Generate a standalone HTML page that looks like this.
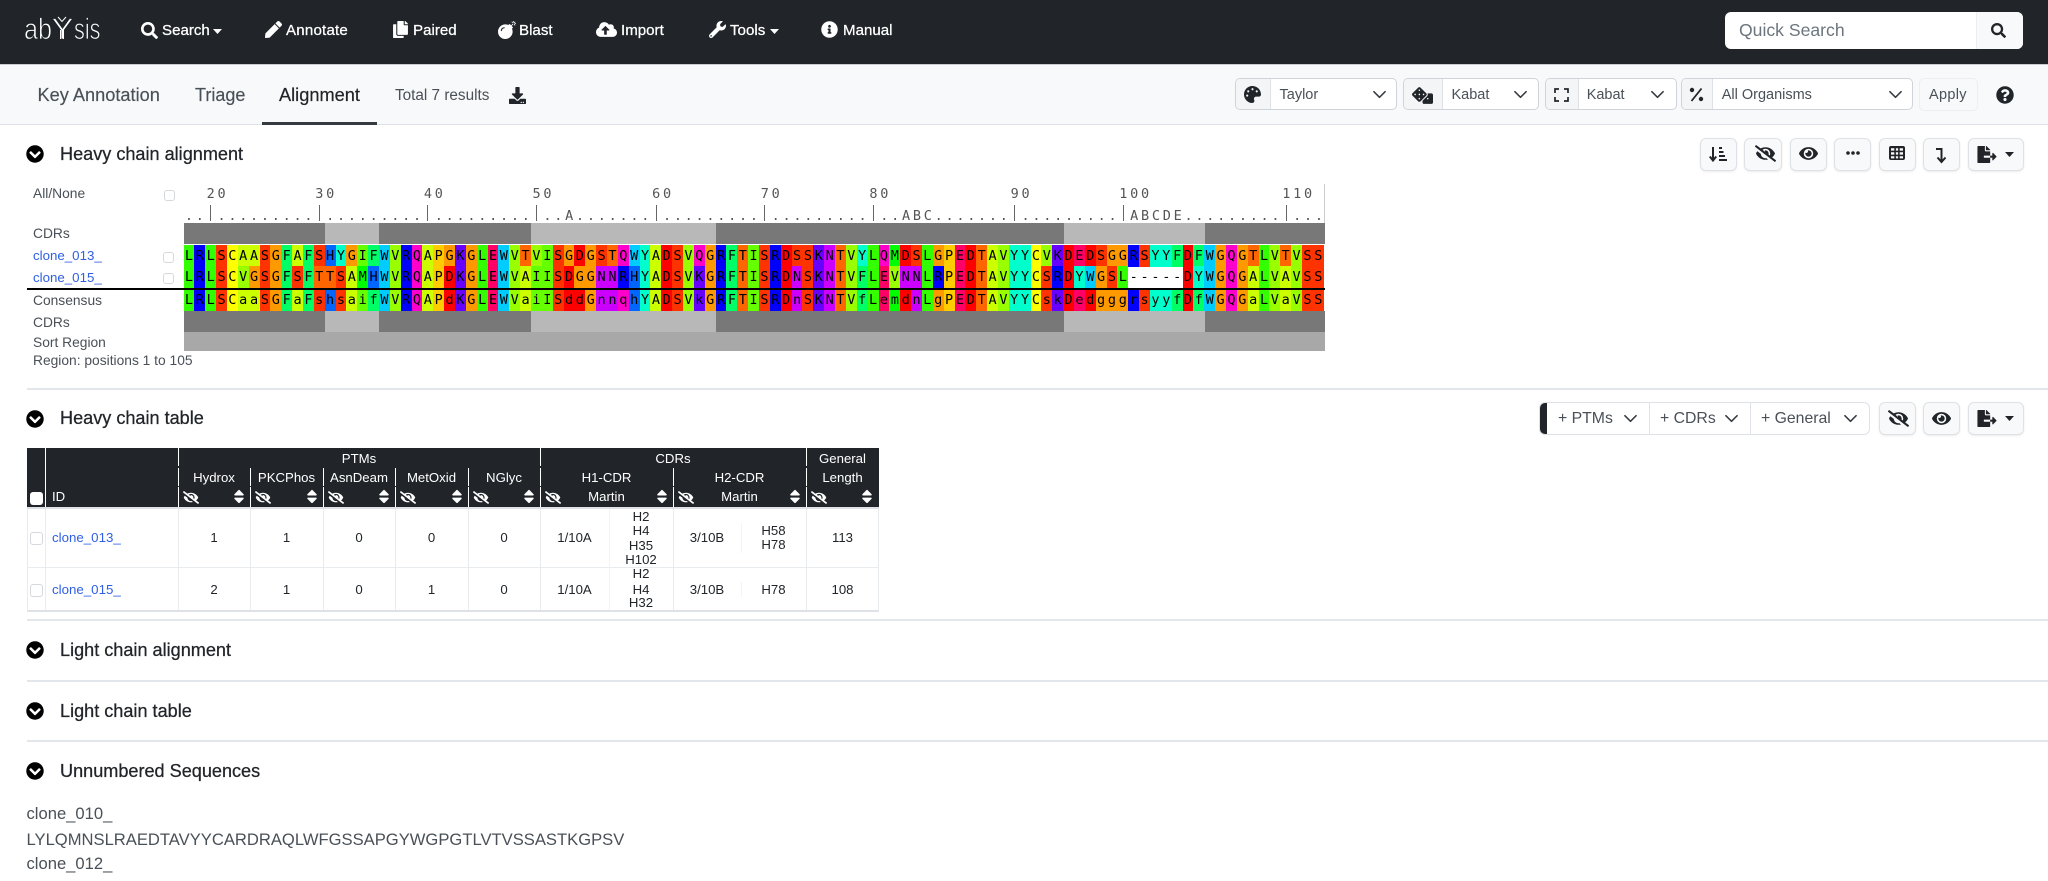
<!DOCTYPE html>
<html lang="en"><head><meta charset="utf-8"><title>abYsis</title>
<style>
html,body{margin:0;padding:0;width:2048px;height:881px;overflow:hidden;background:#fff;font-family:"Liberation Sans",Arial,sans-serif;color:#212529}
div,span,svg,a{position:absolute}
.t{white-space:nowrap;line-height:20px;height:20px}
.n{color:#fff;font-size:15.1px;-webkit-text-stroke:.25px #fff;top:21px}
.nav svg{color:#fff}
svg{display:block;fill:currentColor}
.h{font-size:18.1px;color:#212529;-webkit-text-stroke:.25px #212529;left:60px}
.l{font-size:13.8px;color:#495057;left:33px}
.lk{color:#2f5fe3;font-size:13.3px}
.sel{top:78px;height:30px;background:#fff;border:1px solid #ced4da;border-radius:5px;overflow:hidden}
.ad{left:0;top:0;bottom:0;background:#f4f5f7;border-right:1px solid #dee2e6}
.st{font-size:14.5px;color:#495057;top:85px}
.ch{width:15px;height:15px;fill:none;stroke:#343a40;stroke-width:1.6}
.btn{top:138px;height:31px;background:#f8f9fa;border:1px solid #dee2e6;border-radius:6px;box-shadow:0 1px 2px rgba(0,0,0,.08)}
.b2{top:402px}
.ic{color:#212529}
.sep{left:27px;width:2021px;height:2px;background:#e3e6ea}
.cb{width:11px;height:11px;border:1px solid #d5d8dc;border-radius:3px;background:#fff}
.cs{width:9px;height:9px}
.seq{left:183.5px;width:1142px;height:22px;line-height:22px;font-family:"DejaVu Sans Mono","Liberation Mono",monospace;font-size:13.5px;color:#000;white-space:nowrap}
.seq i{font-style:normal;display:inline-block;width:10.865px;text-align:center;height:100%;vertical-align:top}
.rul{left:184.87px;font-family:"DejaVu Sans Mono","Liberation Mono",monospace;font-size:13.5px;letter-spacing:2.738px;color:#555;white-space:pre;line-height:20px;height:20px}
.tk{width:1.2px;height:16px;top:205px;background:#666}
.D{background:#f00}.S{background:#f30}.T{background:#f60}.G{background:#f90}.P{background:#fc0}.C{background:#ff0}.A{background:#cf0}.V{background:#9f0}.I{background:#6f0}.L{background:#3f0}.M{background:#0f0}.F{background:#0f6}.Y{background:#0fc}.W{background:#0cf}.H{background:#06f}.R{background:#00f}.K{background:#60f}.N{background:#c0f}.Q{background:#f0c}.E{background:#f06}
.band{height:21px}
.th{font-size:13.2px;color:#fff;text-align:center}
.td{font-size:13.2px;color:#212529;text-align:center}
.wl{width:1px;background:#fff}
.gl{background:#e9ecef}
.w{color:#fff}
</style></head><body>
<svg width="0" height="0" style="position:absolute"><defs>
<symbol id="search" viewBox="0 0 512 512"><path d="M505 442.7L405.3 343c-4.5-4.5-10.6-7-17-7H372c27.6-35.3 44-79.7 44-128C416 93.1 322.9 0 208 0S0 93.1 0 208s93.1 208 208 208c48.3 0 92.7-16.4 128-44v16.3c0 6.4 2.5 12.5 7 17l99.7 99.7c9.4 9.4 24.6 9.4 33.9 0l28.3-28.3c9.4-9.4 9.4-24.6.1-34zM208 336c-70.7 0-128-57.2-128-128 0-70.7 57.2-128 128-128 70.7 0 128 57.2 128 128 0 70.7-57.2 128-128 128z"/></symbol>
<symbol id="pen" viewBox="0 0 512 512"><path d="M290.74 93.24l128.02 128.02-277.99 277.99-114.14 12.6C11.35 513.54-1.56 500.62.14 485.34l12.7-114.22 277.9-278.88zm207.2-19.06l-60.11-60.11c-18.75-18.75-49.16-18.75-67.9 0l-56.55 56.55 128.02 128.02 56.55-56.55c18.75-18.76 18.75-49.16 0-67.91z"/></symbol>
<symbol id="copy" viewBox="0 0 448 512"><path d="M320 448v40c0 13.255-10.745 24-24 24H24c-13.255 0-24-10.745-24-24V120c0-13.255 10.745-24 24-24h72v296c0 30.879 25.121 56 56 56h168zm0-344V0H152c-13.255 0-24 10.745-24 24v368c0 13.255 10.745 24 24 24h272c13.255 0 24-10.745 24-24V128H344c-13.2 0-24-10.8-24-24zm120.971-31.029L375.029 7.029A24 24 0 0 0 358.059 0H352v96h96v-6.059a24 24 0 0 0-7.029-16.97z"/></symbol>
<symbol id="bomb" viewBox="0 0 512 512"><path d="M440.5 88.5l-52 52L415 167c9.4 9.4 9.4 24.6 0 33.9l-17.4 17.4c11.8 26.1 18.4 55.1 18.4 85.6 0 114.9-93.1 208-208 208S0 418.9 0 304 93.1 96 208 96c30.5 0 59.5 6.6 85.6 18.4L311 97c9.4-9.4 24.6-9.4 33.9 0l26.5 26.5 52-52 17.1 17zM500 60h-24c-6.6 0-12 5.4-12 12s5.4 12 12 12h24c6.6 0 12-5.4 12-12s-5.4-12-12-12zM440 0c-6.6 0-12 5.4-12 12v24c0 6.6 5.4 12 12 12s12-5.4 12-12V12c0-6.6-5.4-12-12-12zm33.9 55l17-17c4.7-4.7 4.7-12.3 0-17-4.7-4.7-12.3-4.7-17 0l-17 17c-4.7 4.7-4.7 12.3 0 17 4.8 4.7 12.4 4.7 17 0zm-67.8 0c4.7 4.7 12.3 4.7 17 0 4.7-4.7 4.7-12.3 0-17l-17-17c-4.7-4.7-12.3-4.7-17 0-4.7 4.7-4.7 12.3 0 17l17 17zm67.8 34c-4.7-4.7-12.3-4.7-17 0-4.7 4.7-4.7 12.3 0 17l17 17c4.7 4.7 12.3 4.7 17 0 4.7-4.7 4.7-12.3 0-17l-17-17zM112 272c0-35.3 28.7-64 64-64 8.8 0 16-7.2 16-16s-7.2-16-16-16c-52.9 0-96 43.1-96 96 0 8.8 7.2 16 16 16s16-7.2 16-16z"/></symbol>
<symbol id="cloud" viewBox="0 0 640 512"><path d="M537.6 226.6c4.1-10.7 6.4-22.4 6.4-34.6 0-53-43-96-96-96-19.7 0-38.1 6-53.3 16.2C367 64.2 315.3 32 256 32c-88.4 0-160 71.6-160 160 0 2.7.1 5.4.2 8.1C40.2 219.8 0 273.2 0 336c0 79.5 64.5 144 144 144h368c70.7 0 128-57.3 128-128 0-61.9-44-113.6-102.4-125.4zM393.4 288H328v112c0 8.8-7.2 16-16 16h-48c-8.8 0-16-7.2-16-16V288h-65.4c-14.3 0-21.4-17.2-11.3-27.3l105.4-105.4c6.2-6.2 16.4-6.2 22.6 0l105.4 105.4c10.1 10.1 2.9 27.3-11.3 27.3z"/></symbol>
<symbol id="wrench" viewBox="0 0 512 512"><path d="M507.73 109.1c-2.24-9.03-13.54-12.09-20.12-5.51l-74.36 74.36-67.88-11.31-11.31-67.88 74.36-74.36c6.62-6.62 3.43-17.9-5.66-20.16-47.38-11.74-99.55.91-136.58 37.93-39.64 39.64-50.55 97.1-34.05 147.2L18.74 402.76c-24.99 24.99-24.99 65.51 0 90.5 24.99 24.99 65.51 24.99 90.5 0l213.21-213.21c50.12 16.71 107.47 5.68 147.37-34.22 37.07-37.07 49.7-89.32 37.91-136.73zM64 472c-13.25 0-24-10.75-24-24 0-13.26 10.75-24 24-24s24 10.74 24 24c0 13.25-10.75 24-24 24z"/></symbol>
<symbol id="info" viewBox="0 0 512 512"><path d="M256 8C119.043 8 8 119.083 8 256c0 136.997 111.043 248 248 248s248-111.003 248-248C504 119.083 392.957 8 256 8zm0 110c23.196 0 42 18.804 42 42s-18.804 42-42 42-42-18.804-42-42 18.804-42 42-42zm56 254c0 6.627-5.373 12-12 12h-88c-6.627 0-12-5.373-12-12v-24c0-6.627 5.373-12 12-12h12v-64h-12c-6.627 0-12-5.373-12-12v-24c0-6.627 5.373-12 12-12h64c6.627 0 12 5.373 12 12v100h12c6.627 0 12 5.373 12 12v24z"/></symbol>
<symbol id="dl" viewBox="0 0 512 512"><path d="M216 0h80c13.3 0 24 10.7 24 24v168h87.7c17.8 0 26.7 21.5 14.1 34.1L269.7 378.3c-7.5 7.5-19.8 7.5-27.3 0L90.1 226.1c-12.6-12.6-3.7-34.1 14.1-34.1H192V24c0-13.3 10.7-24 24-24zm296 376v112c0 13.3-10.7 24-24 24H24c-13.3 0-24-10.7-24-24V376c0-13.3 10.7-24 24-24h146.7l49 49c20.1 20.1 52.5 20.1 72.6 0l49-49H488c13.3 0 24 10.7 24 24zm-124 88c0-11-9-20-20-20s-20 9-20 20 9 20 20 20 20-9 20-20zm64 0c0-11-9-20-20-20s-20 9-20 20 9 20 20 20 20-9 20-20z"/></symbol>
<symbol id="palette" viewBox="0 0 512 512"><path d="M204.3 5C104.9 24.4 24.8 104.3 5.2 203.4c-37 187 131.7 326.4 258.8 306.7 41.2-6.4 61.4-54.6 42.5-91.7-23.1-45.4 9.9-98.4 60.9-98.4h79.7c35.8 0 64.8-29.6 64.9-65.3C511.5 97.1 368.1-26.9 204.3 5zM96 320c-17.7 0-32-14.3-32-32s14.3-32 32-32 32 14.3 32 32-14.3 32-32 32zm32-128c-17.7 0-32-14.3-32-32s14.3-32 32-32 32 14.3 32 32-14.3 32-32 32zm128-64c-17.7 0-32-14.3-32-32s14.3-32 32-32 32 14.3 32 32-14.3 32-32 32zm128 64c-17.7 0-32-14.3-32-32s14.3-32 32-32 32 14.3 32 32-14.3 32-32 32z"/></symbol>
<symbol id="dice" viewBox="0 0 640 512"><path d="M592 192H473.26c12.69 29.59 7.12 65.2-17 89.32L320 417.58V464c0 26.51 21.49 48 48 48h224c26.51 0 48-21.49 48-48V240c0-26.51-21.49-48-48-48zM480 376c-13.25 0-24-10.75-24-24 0-13.26 10.75-24 24-24s24 10.74 24 24c0 13.25-10.75 24-24 24zm-46.37-186.7L258.7 14.37c-19.16-19.16-50.23-19.16-69.39 0L14.37 189.3c-19.16 19.16-19.16 50.23 0 69.39L189.3 433.63c19.16 19.16 50.23 19.16 69.39 0L433.63 258.7c19.16-19.17 19.16-50.24 0-69.4zM96 248c-13.25 0-24-10.75-24-24 0-13.26 10.75-24 24-24s24 10.74 24 24c0 13.25-10.75 24-24 24zm128 128c-13.25 0-24-10.75-24-24 0-13.26 10.75-24 24-24s24 10.74 24 24c0 13.25-10.75 24-24 24zm0-128c-13.25 0-24-10.75-24-24 0-13.26 10.75-24 24-24s24 10.74 24 24c0 13.25-10.75 24-24 24zm0-128c-13.25 0-24-10.75-24-24 0-13.26 10.75-24 24-24s24 10.74 24 24c0 13.25-10.75 24-24 24zm128 128c-13.25 0-24-10.75-24-24 0-13.26 10.75-24 24-24s24 10.74 24 24c0 13.25-10.75 24-24 24z"/></symbol>
<symbol id="q" viewBox="0 0 512 512"><path d="M504 256c0 136.997-111.043 248-248 248S8 392.997 8 256C8 119.083 119.043 8 256 8s248 111.083 248 248zM262.655 90c-54.497 0-89.255 22.957-116.549 63.758-3.536 5.286-2.353 12.415 2.715 16.258l34.699 26.31c5.205 3.947 12.621 3.008 16.665-2.122 17.864-22.658 30.113-35.797 57.303-35.797 20.429 0 45.698 13.148 45.698 32.958 0 14.976-12.363 22.667-32.534 33.976C247.128 238.528 216 254.941 216 296v4c0 6.627 5.373 12 12 12h56c6.627 0 12-5.373 12-12v-1.333c0-28.462 83.186-29.647 83.186-106.667 0-58.002-60.165-102-116.531-102zM256 338c-25.365 0-46 20.635-46 46 0 25.364 20.635 46 46 46s46-20.636 46-46c0-25.365-20.635-46-46-46z"/></symbol>
<symbol id="cc" viewBox="0 0 512 512"><path d="M504 256c0 137-111 248-248 248S8 393 8 256 119 8 256 8s248 111 248 248zM273 369.9l135.5-135.5c9.4-9.4 9.4-24.6 0-33.9l-17-17c-9.4-9.4-24.6-9.4-33.9 0L256 285.1 154.4 183.5c-9.4-9.4-24.6-9.4-33.9 0l-17 17c-9.4 9.4-9.4 24.6 0 33.9L239 369.9c9.4 9.4 24.6 9.4 34 0z"/></symbol>
<symbol id="eyes" viewBox="0 0 640 512"><path d="M320 400c-75.85 0-137.25-58.71-142.9-133.11L72.2 185.82c-13.79 17.3-26.48 35.59-36.72 55.59a32.35 32.35 0 0 0 0 29.19C89.71 376.41 197.07 448 320 448c26.91 0 52.87-4 77.89-10.46L346 397.39a144.13 144.13 0 0 1-26 2.61zm313.82 58.1l-110.55-85.44a331.25 331.25 0 0 0 81.25-102.07 32.35 32.35 0 0 0 0-29.19C550.29 135.59 442.93 64 320 64a308.15 308.15 0 0 0-147.32 37.7L45.46 3.37A16 16 0 0 0 23 6.18L3.37 31.45A16 16 0 0 0 6.18 53.9l588.36 454.73a16 16 0 0 0 22.46-2.81l19.64-25.27a16 16 0 0 0-2.82-22.45zm-183.72-142l-39.3-30.38A94.75 94.75 0 0 0 416 256a94.76 94.76 0 0 0-121.31-92.21A47.65 47.65 0 0 1 304 192a46.64 46.64 0 0 1-1.54 10l-73.61-56.89A142.31 142.31 0 0 1 320 112a143.92 143.92 0 0 1 144 144c0 21.63-5.29 41.79-13.9 60.11z"/></symbol>
<symbol id="eye" viewBox="0 0 576 512"><path d="M572.52 241.4C518.29 135.59 410.93 64 288 64S57.68 135.64 3.48 241.41a32.35 32.35 0 0 0 0 29.19C57.71 376.41 165.07 448 288 448s230.32-71.64 284.52-177.41a32.35 32.35 0 0 0 0-29.19zM288 400a144 144 0 1 1 144-144 143.93 143.93 0 0 1-144 144zm0-240a95.31 95.31 0 0 0-25.31 3.79 47.85 47.85 0 0 1-66.9 66.9A95.78 95.78 0 1 0 288 160z"/></symbol>
<symbol id="th" viewBox="0 0 16 16"><path fill-rule="evenodd" d="M2 1h12a2 2 0 0 1 2 2v10a2 2 0 0 1-2 2H2a2 2 0 0 1-2-2V3a2 2 0 0 1 2-2zm0 2.200v2.400h3.300V3.200zm4.900 0v2.400h2.200V3.200zm3.800 0v2.400H14V3.200zM2 7.200v2.400h3.300V7.200zm4.900 0v2.400h2.200V7.200zm3.800 0v2.400H14V7.200zM2 11.200v2.200h3.300v-2.200zm4.900 0v2.200h2.200v-2.200zm3.800 0v2.200H14v-2.200z"/></symbol>
<symbol id="fx" viewBox="0 0 576 512"><path d="M384 121.9c0-6.3-2.5-12.4-7-16.9L279.1 7c-4.5-4.5-10.6-7-17-7H256v128h128zM571 308l-95.7-96.4c-10.1-10.1-27.4-3-27.4 11.3V288h-64v64h64v65.2c0 14.3 17.3 21.4 27.4 11.3L571 332c6.6-6.6 6.6-17.4 0-24zm-379 28v-32c0-8.8 7.2-16 16-16h176V160H248c-13.2 0-24-10.8-24-24V0H24C10.7 0 0 10.7 0 24v464c0 13.3 10.7 24 24 24h336c13.3 0 24-10.7 24-24V352H208c-8.8 0-16-7.2-16-16z"/></symbol>
<symbol id="sort" viewBox="0 0 320 512"><path d="M41 288h238c21.4 0 32.1 25.9 17 41L177 448c-9.4 9.4-24.6 9.4-33.9 0L24 329c-15.1-15.1-4.4-41 17-41zm255-105L177 64c-9.4-9.4-24.6-9.4-33.9 0L24 183c-15.1 15.1-4.4 41 17 41h238c21.4 0 32.1-25.9 17-41z"/></symbol>
<symbol id="chev" viewBox="0 0 16 16"><path d="M2 5l6 6 6-6" fill="none" stroke-linecap="round" stroke-linejoin="round"/></symbol>
</defs></svg>

<!-- NAV -->
<div class="nav" style="left:0;top:0;width:2048px;height:64px;background:#212529;border-bottom:1px solid #c9cdd1">
<svg style="left:20px;top:10px;width:90px;height:40px;overflow:visible" viewBox="20 10 90 40">
<g font-family="Liberation Sans" fill="#fff" stroke="#212529" stroke-width=".85">
<text x="24" y="39" font-size="30" textLength="28" lengthAdjust="spacingAndGlyphs">ab</text>
<text x="51.500" y="39" font-size="30" textLength="22" lengthAdjust="spacingAndGlyphs">Y</text>
<text x="74" y="39" font-size="30" textLength="26.500" lengthAdjust="spacingAndGlyphs">sis</text>
</g>
<path d="M58 17l4 4.500 4-4.500M60.500 30v9M63.500 30v9" fill="none" stroke="#fff" stroke-width="1"/>
</svg>
<svg style="left:141px;top:22px;width:17px;height:17px"><use href="#search"/></svg>
<span class="t n" style="left:162px">Search</span>
<svg style="left:213px;top:29px;width:9px;height:5px" viewBox="0 0 9 5"><path d="M0 0h9L4.500 5z"/></svg>
<svg style="left:265px;top:21px;width:17px;height:17px"><use href="#pen"/></svg>
<span class="t n" style="left:286px;letter-spacing:.2px">Annotate</span>
<svg style="left:392px;top:21px;width:17px;height:17px"><use href="#copy"/></svg>
<span class="t n" style="left:413px">Paired</span>
<svg style="left:498px;top:21px;width:18px;height:18px"><use href="#bomb"/></svg>
<span class="t n" style="left:519px">Blast</span>
<svg style="left:596px;top:21px;width:21px;height:17px"><use href="#cloud"/></svg>
<span class="t n" style="left:621px">Import</span>
<svg style="left:709px;top:21px;width:17px;height:17px"><use href="#wrench"/></svg>
<span class="t n" style="left:730px">Tools</span>
<svg style="left:770px;top:29px;width:9px;height:5px" viewBox="0 0 9 5"><path d="M0 0h9L4.500 5z"/></svg>
<svg style="left:821px;top:21px;width:17px;height:17px"><use href="#info"/></svg>
<span class="t n" style="left:843px">Manual</span>
<div style="left:1725px;top:12px;width:298px;height:37px;background:#fff;border-radius:6px;overflow:hidden">
<div style="left:251px;top:0;width:47px;height:37px;background:#f8f9fa;border-left:1px solid #eceef0"></div>
<span class="t" style="left:14px;top:8px;font-size:17.6px;color:#6c757d">Quick Search</span>
<svg style="left:266px;top:11px;width:15px;height:15px;color:#212529"><use href="#search"/></svg>
</div>
</div>

<!-- TOOLBAR -->
<div style="left:0;top:65px;width:2048px;height:59px;background:#f8f9fa"></div>
<div style="left:0;top:124px;width:2048px;height:1px;background:#dee2e6"></div>
<span class="t" style="left:37.500px;top:85px;font-size:18.2px;color:#495057;-webkit-text-stroke:.15px #495057">Key Annotation</span>
<span class="t" style="left:195px;top:85px;font-size:18px;color:#495057;-webkit-text-stroke:.15px #495057">Triage</span>
<span class="t" style="left:279px;top:85px;font-size:18.2px;color:#212529;-webkit-text-stroke:.2px #212529">Alignment</span>
<div style="left:262px;top:122px;width:115px;height:3px;background:#343a40"></div>
<span class="t" style="left:395px;top:86px;font-size:15.3px;color:#495057">Total 7 results</span>
<svg class="ic" style="left:509px;top:87px;width:17px;height:17px"><use href="#dl"/></svg>

<div class="sel" style="left:1235px;width:160px"><div class="ad" style="width:34px"></div></div>
<svg class="ic" style="left:1244px;top:86px;width:17px;height:17px"><use href="#palette"/></svg>
<span class="t st" style="left:1279.500px">Taylor</span>
<svg class="ch" style="left:1371.500px;top:87px"><use href="#chev"/></svg>

<div class="sel" style="left:1403px;width:134px"><div class="ad" style="width:38px"></div></div>
<svg class="ic" style="left:1412px;top:87px;width:21px;height:17px"><use href="#dice"/></svg>
<span class="t st" style="left:1451.500px">Kabat</span>
<svg class="ch" style="left:1512.500px;top:87px"><use href="#chev"/></svg>

<div class="sel" style="left:1544.500px;width:130px"><div class="ad" style="width:32px"></div></div>
<svg class="ic" style="left:1554px;top:87px;width:15px;height:16px" viewBox="0 0 15 16"><path d="M1 6V2h4M10 2h4v4M14 10v4h-4M5 14H1v-4" fill="none" stroke="currentColor" stroke-width="1.700"/></svg>
<span class="t st" style="left:1586.700px">Kabat</span>
<svg class="ch" style="left:1650px;top:87px"><use href="#chev"/></svg>

<div class="sel" style="left:1681px;width:230px"><div class="ad" style="width:30px"></div></div>
<svg class="ic" style="left:1689px;top:87px;width:15px;height:15px" viewBox="0 0 15 15"><path d="M12.500 1.500L2.500 14" stroke="currentColor" stroke-width="1.800" fill="none"/><circle cx="3" cy="3" r="2.200"/><circle cx="12" cy="12" r="2.200"/></svg>
<span class="t st" style="left:1721.700px">All Organisms</span>
<svg class="ch" style="left:1887.500px;top:87px"><use href="#chev"/></svg>

<div style="left:1919px;top:78px;width:57px;height:31px;background:#f8f9fa;border:1px solid #eceef0;border-radius:5px"></div>
<span class="t st" style="left:1929px;color:#495057;letter-spacing:.3px">Apply</span>
<svg class="ic" style="left:1996px;top:86px;width:18px;height:18px"><use href="#q"/></svg>

<!-- HEAVY ALIGN HEAD -->
<svg style="left:26px;top:145px;width:18px;height:18px;color:#000"><use href="#cc"/></svg>
<span class="t h" style="top:144px">Heavy chain alignment</span>
<div class="btn" style="left:1700px;width:35px"></div>
<svg class="ic" style="left:1709px;top:146px;width:18px;height:17px" viewBox="0 0 18 17"><path d="M4 1v13M.800 10.500L4 14.500l3.200-4" fill="none" stroke="currentColor" stroke-width="2"/><rect x="10" y="1" width="3" height="2"/><rect x="10" y="5" width="4.500" height="2"/><rect x="10" y="9" width="6" height="2"/><rect x="10" y="13" width="8" height="2"/></svg>
<div class="btn" style="left:1744px;width:36px"></div>
<svg class="ic" style="left:1755px;top:145px;width:21px;height:17px"><use href="#eyes"/></svg>
<div class="btn" style="left:1790px;width:35px"></div>
<svg class="ic" style="left:1799px;top:145px;width:19px;height:17px"><use href="#eye"/></svg>
<div class="btn" style="left:1834px;width:35px"></div>
<svg class="ic" style="left:1846px;top:151px;width:14px;height:4px" viewBox="0 0 14 4"><circle cx="2" cy="2" r="1.800"/><circle cx="7" cy="2" r="1.800"/><circle cx="12" cy="2" r="1.800"/></svg>
<div class="btn" style="left:1879px;width:35px"></div>
<svg class="ic" style="left:1889px;top:145px;width:16px;height:16px"><use href="#th"/></svg>
<div class="btn" style="left:1923px;width:35px"></div>
<svg class="ic" style="left:1935px;top:147px;width:13px;height:17px" viewBox="0 0 13 17"><path d="M1 2h5.500v13M2.500 10.500l4 4.500 4-4.500" fill="none" stroke="currentColor" stroke-width="2"/></svg>
<div class="btn" style="left:1968px;width:54px"></div>
<svg class="ic" style="left:1977px;top:146px;width:20px;height:17px"><use href="#fx"/></svg>
<svg class="ic" style="left:2005px;top:152px;width:9px;height:5px" viewBox="0 0 9 5"><path d="M0 0h9L4.500 5z"/></svg>

<!-- ALIGNMENT -->
<span class="t l" style="top:184px">All/None</span>
<div class="cb cs" style="left:164px;top:190px"></div>
<span class="rul" style="top:184px">  20        30        40        50         60        70        80           90        100            110</span>
<span class="rul" style="top:206px">.. ......... ......... ......... ..A....... ......... ......... ..ABC....... ......... ABCDE......... ...</span>
<div class="tk" style="left:210px"></div><div class="tk" style="left:318.600px"></div><div class="tk" style="left:427.300px"></div><div class="tk" style="left:536px"></div><div class="tk" style="left:655.500px"></div><div class="tk" style="left:764.100px"></div><div class="tk" style="left:872.800px"></div><div class="tk" style="left:1014px"></div><div class="tk" style="left:1122.700px"></div><div class="tk" style="left:1285.700px"></div>
<div style="left:1324px;top:184px;width:1px;height:39px;background:#ccc"></div>
<span class="t l" style="top:224px">CDRs</span>
<a class="t lk" style="left:33px;top:246px">clone_013_</a>
<div class="cb cs" style="left:163px;top:252px"></div>
<a class="t lk" style="left:33px;top:268px">clone_015_</a>
<div class="cb cs" style="left:163px;top:273px"></div>
<span class="t l" style="top:291px">Consensus</span>
<span class="t l" style="top:313px">CDRs</span>
<span class="t l" style="top:333px">Sort Region</span>
<span class="t l" style="top:351px">Region: positions 1 to 105</span>

<div class="band" style="left:183.500px;top:223px;width:141.500px;background:#787878"></div>
<div class="band" style="left:325px;top:223px;width:54px;background:#b8b8b8"></div>
<div class="band" style="left:379px;top:223px;width:152px;background:#787878"></div>
<div class="band" style="left:531px;top:223px;width:185.300px;background:#b8b8b8"></div>
<div class="band" style="left:716.300px;top:223px;width:347.700px;background:#787878"></div>
<div class="band" style="left:1064px;top:223px;width:141px;background:#b8b8b8"></div>
<div class="band" style="left:1205px;top:223px;width:119.500px;background:#787878"></div>

<div class="seq" style="top:244.500px"><i class=L>L</i><i class=R>R</i><i class=L>L</i><i class=S>S</i><i class=C>C</i><i class=A>A</i><i class=A>A</i><i class=S>S</i><i class=G>G</i><i class=F>F</i><i class=A>A</i><i class=F>F</i><i class=S>S</i><i class=H>H</i><i class=Y>Y</i><i class=G>G</i><i class=I>I</i><i class=F>F</i><i class=W>W</i><i class=V>V</i><i class=R>R</i><i class=Q>Q</i><i class=A>A</i><i class=P>P</i><i class=G>G</i><i class=K>K</i><i class=G>G</i><i class=L>L</i><i class=E>E</i><i class=W>W</i><i class=V>V</i><i class=T>T</i><i class=V>V</i><i class=I>I</i><i class=S>S</i><i class=G>G</i><i class=D>D</i><i class=G>G</i><i class=S>S</i><i class=T>T</i><i class=Q>Q</i><i class=W>W</i><i class=Y>Y</i><i class=A>A</i><i class=D>D</i><i class=S>S</i><i class=V>V</i><i class=Q>Q</i><i class=G>G</i><i class=R>R</i><i class=F>F</i><i class=T>T</i><i class=I>I</i><i class=S>S</i><i class=R>R</i><i class=D>D</i><i class=S>S</i><i class=S>S</i><i class=K>K</i><i class=N>N</i><i class=T>T</i><i class=V>V</i><i class=Y>Y</i><i class=L>L</i><i class=Q>Q</i><i class=M>M</i><i class=D>D</i><i class=S>S</i><i class=L>L</i><i class=G>G</i><i class=P>P</i><i class=E>E</i><i class=D>D</i><i class=T>T</i><i class=A>A</i><i class=V>V</i><i class=Y>Y</i><i class=Y>Y</i><i class=C>C</i><i class=V>V</i><i class=K>K</i><i class=D>D</i><i class=E>E</i><i class=D>D</i><i class=S>S</i><i class=G>G</i><i class=G>G</i><i class=R>R</i><i class=S>S</i><i class=Y>Y</i><i class=Y>Y</i><i class=F>F</i><i class=D>D</i><i class=F>F</i><i class=W>W</i><i class=G>G</i><i class=Q>Q</i><i class=G>G</i><i class=T>T</i><i class=L>L</i><i class=V>V</i><i class=T>T</i><i class=V>V</i><i class=S>S</i><i class=S>S</i></div>

<div class="seq" style="top:266.300px"><i class=L>L</i><i class=R>R</i><i class=L>L</i><i class=S>S</i><i class=C>C</i><i class=V>V</i><i class=G>G</i><i class=S>S</i><i class=G>G</i><i class=F>F</i><i class=S>S</i><i class=F>F</i><i class=T>T</i><i class=T>T</i><i class=S>S</i><i class=A>A</i><i class=M>M</i><i class=H>H</i><i class=W>W</i><i class=V>V</i><i class=R>R</i><i class=Q>Q</i><i class=A>A</i><i class=P>P</i><i class=D>D</i><i class=K>K</i><i class=G>G</i><i class=L>L</i><i class=E>E</i><i class=W>W</i><i class=V>V</i><i class=A>A</i><i class=I>I</i><i class=I>I</i><i class=S>S</i><i class=D>D</i><i class=G>G</i><i class=G>G</i><i class=N>N</i><i class=N>N</i><i class=R>R</i><i class=H>H</i><i class=Y>Y</i><i class=A>A</i><i class=D>D</i><i class=S>S</i><i class=V>V</i><i class=K>K</i><i class=G>G</i><i class=R>R</i><i class=F>F</i><i class=T>T</i><i class=I>I</i><i class=S>S</i><i class=R>R</i><i class=D>D</i><i class=N>N</i><i class=S>S</i><i class=K>K</i><i class=N>N</i><i class=T>T</i><i class=V>V</i><i class=F>F</i><i class=L>L</i><i class=E>E</i><i class=V>V</i><i class=N>N</i><i class=N>N</i><i class=L>L</i><i class=R>R</i><i class=P>P</i><i class=E>E</i><i class=D>D</i><i class=T>T</i><i class=A>A</i><i class=V>V</i><i class=Y>Y</i><i class=Y>Y</i><i class=C>C</i><i class=S>S</i><i class=R>R</i><i class=D>D</i><i class=Y>Y</i><i class=W>W</i><i class=G>G</i><i class=S>S</i><i class=L>L</i><i>-</i><i>-</i><i>-</i><i>-</i><i>-</i><i class=D>D</i><i class=Y>Y</i><i class=W>W</i><i class=G>G</i><i class=Q>Q</i><i class=G>G</i><i class=A>A</i><i class=L>L</i><i class=V>V</i><i class=A>A</i><i class=V>V</i><i class=S>S</i><i class=S>S</i></div>

<div style="left:27px;top:288px;width:1298px;height:2px;background:#000"></div>

<div class="seq" style="top:290px;height:21px;line-height:21px"><i class=L>L</i><i class=R>R</i><i class=L>L</i><i class=S>S</i><i class=C>C</i><i class=A>a</i><i class=A>a</i><i class=S>S</i><i class=G>G</i><i class=F>F</i><i class=A>a</i><i class=F>F</i><i class=S>s</i><i class=H>h</i><i class=S>s</i><i class=A>a</i><i class=I>i</i><i class=F>f</i><i class=W>W</i><i class=V>V</i><i class=R>R</i><i class=Q>Q</i><i class=A>A</i><i class=P>P</i><i class=D>d</i><i class=K>K</i><i class=G>G</i><i class=L>L</i><i class=E>E</i><i class=W>W</i><i class=V>V</i><i class=A>a</i><i class=I>i</i><i class=I>I</i><i class=S>S</i><i class=D>d</i><i class=D>d</i><i class=G>G</i><i class=N>n</i><i class=N>n</i><i class=Q>q</i><i class=H>h</i><i class=Y>Y</i><i class=A>A</i><i class=D>D</i><i class=S>S</i><i class=V>V</i><i class=K>k</i><i class=G>G</i><i class=R>R</i><i class=F>F</i><i class=T>T</i><i class=I>I</i><i class=S>S</i><i class=R>R</i><i class=D>D</i><i class=N>n</i><i class=S>S</i><i class=K>K</i><i class=N>N</i><i class=T>T</i><i class=V>V</i><i class=F>f</i><i class=L>L</i><i class=E>e</i><i class=M>m</i><i class=D>d</i><i class=N>n</i><i class=L>L</i><i class=G>g</i><i class=P>P</i><i class=E>E</i><i class=D>D</i><i class=T>T</i><i class=A>A</i><i class=V>V</i><i class=Y>Y</i><i class=Y>Y</i><i class=C>C</i><i class=S>s</i><i class=K>k</i><i class=D>D</i><i class=E>e</i><i class=D>d</i><i class=G>g</i><i class=G>g</i><i class=G>g</i><i class=R>r</i><i class=S>s</i><i class=Y>y</i><i class=Y>y</i><i class=F>f</i><i class=D>D</i><i class=F>f</i><i class=W>W</i><i class=G>G</i><i class=Q>Q</i><i class=G>G</i><i class=A>a</i><i class=L>L</i><i class=V>V</i><i class=A>a</i><i class=V>V</i><i class=S>S</i><i class=S>S</i></div>

<div class="band" style="left:183.500px;top:311px;width:141.500px;background:#787878"></div>
<div class="band" style="left:325px;top:311px;width:54px;background:#b8b8b8"></div>
<div class="band" style="left:379px;top:311px;width:152px;background:#787878"></div>
<div class="band" style="left:531px;top:311px;width:185.300px;background:#b8b8b8"></div>
<div class="band" style="left:716.300px;top:311px;width:347.700px;background:#787878"></div>
<div class="band" style="left:1064px;top:311px;width:141px;background:#b8b8b8"></div>
<div class="band" style="left:1205px;top:311px;width:119.500px;background:#787878"></div>
<div style="left:183.500px;top:332px;width:1141px;height:19px;background:#a8a8a8"></div>

<div class="sep" style="top:388px"></div>

<!-- HEAVY TABLE HEAD -->
<svg style="left:26px;top:410px;width:18px;height:18px;color:#000"><use href="#cc"/></svg>
<span class="t h" style="top:408px">Heavy chain table</span>
<div style="left:1539px;top:402px;width:329px;height:31px;background:#fff;border:1px solid #dee2e6;border-radius:6px;overflow:hidden">
<div style="left:-1px;top:-1px;width:8px;height:33px;background:#212529"></div>
<div style="left:109px;top:0;width:1px;height:31px;background:#dee2e6"></div>
<div style="left:210px;top:0;width:1px;height:31px;background:#dee2e6"></div>
</div>
<span class="t" style="left:1558px;top:409px;font-size:15.8px;color:#495057">+ PTMs</span>
<svg class="ch" style="left:1622.500px;top:411px"><use href="#chev"/></svg>
<span class="t" style="left:1660px;top:409px;font-size:15.8px;color:#495057">+ CDRs</span>
<svg class="ch" style="left:1724px;top:411px"><use href="#chev"/></svg>
<span class="t" style="left:1761px;top:409px;font-size:15.8px;color:#495057">+ General</span>
<svg class="ch" style="left:1843px;top:411px"><use href="#chev"/></svg>
<div class="btn b2" style="left:1879px;width:35px"></div>
<svg class="ic" style="left:1888px;top:410px;width:21px;height:17px"><use href="#eyes"/></svg>
<div class="btn b2" style="left:1923px;width:35px"></div>
<svg class="ic" style="left:1932px;top:410px;width:19px;height:17px"><use href="#eye"/></svg>
<div class="btn b2" style="left:1968px;width:54px"></div>
<svg class="ic" style="left:1977px;top:410px;width:20px;height:17px"><use href="#fx"/></svg>
<svg class="ic" style="left:2005px;top:416px;width:9px;height:5px" viewBox="0 0 9 5"><path d="M0 0h9L4.500 5z"/></svg>

<!-- TABLE -->
<div style="left:27px;top:448px;width:852px;height:59px;background:#212529"></div>
<div style="left:27px;top:507px;width:852px;height:2px;background:#dee2e6"></div>
<div style="left:27px;top:610px;width:852px;height:2px;background:#dee2e6"></div>
<div class="gl" style="left:27px;top:567px;width:852px;height:1px"></div>
<div class="gl" style="left:27px;top:509px;width:1px;height:102px"></div>
<div class="gl" style="left:878px;top:509px;width:1px;height:102px"></div>
<div class="gl" style="left:45px;top:509px;width:1px;height:101px"></div>
<div class="gl" style="left:178px;top:509px;width:1px;height:101px"></div>
<div class="gl" style="left:250px;top:509px;width:1px;height:101px"></div>
<div class="gl" style="left:323px;top:509px;width:1px;height:101px"></div>
<div class="gl" style="left:395px;top:509px;width:1px;height:101px"></div>
<div class="gl" style="left:468px;top:509px;width:1px;height:101px"></div>
<div class="gl" style="left:540px;top:509px;width:1px;height:101px"></div>
<div class="gl" style="left:673px;top:509px;width:1px;height:101px"></div>
<div class="gl" style="left:806px;top:509px;width:1px;height:101px"></div>
<div style="left:609px;top:509px;width:1px;height:101px;background:#f1f3f5"></div>
<div style="left:741px;top:523px;width:1px;height:30px;background:#f1f3f5"></div>
<div style="left:741px;top:582px;width:1px;height:15px;background:#f1f3f5"></div>
<!-- header white lines -->
<div class="wl" style="left:45px;top:448px;height:59px"></div>
<div class="wl" style="left:178px;top:448px;height:18px"></div><div class="wl" style="left:178px;top:468px;height:18px"></div><div class="wl" style="left:178px;top:487px;height:20px"></div>
<div class="wl" style="left:250px;top:468px;height:18px"></div><div class="wl" style="left:250px;top:487px;height:20px"></div>
<div class="wl" style="left:323px;top:468px;height:18px"></div><div class="wl" style="left:323px;top:487px;height:20px"></div>
<div class="wl" style="left:395px;top:468px;height:18px"></div><div class="wl" style="left:395px;top:487px;height:20px"></div>
<div class="wl" style="left:468px;top:468px;height:18px"></div><div class="wl" style="left:468px;top:487px;height:20px"></div>
<div class="wl" style="left:540px;top:448px;height:18px"></div><div class="wl" style="left:540px;top:468px;height:18px"></div><div class="wl" style="left:540px;top:487px;height:20px"></div>
<div class="wl" style="left:673px;top:468px;height:18px"></div><div class="wl" style="left:673px;top:487px;height:20px"></div>
<div class="wl" style="left:806px;top:448px;height:18px"></div><div class="wl" style="left:806px;top:468px;height:18px"></div><div class="wl" style="left:806px;top:487px;height:20px"></div>

<span class="t th" style="left:178px;width:362px;top:449px">PTMs</span>
<span class="t th" style="left:540px;width:266px;top:449px">CDRs</span>
<span class="t th" style="left:806px;width:73px;top:449px">General</span>
<span class="t th" style="left:178px;width:72px;top:468px">Hydrox</span>
<span class="t th" style="left:250px;width:73px;top:468px">PKCPhos</span>
<span class="t th" style="left:323px;width:72px;top:468px">AsnDeam</span>
<span class="t th" style="left:395px;width:73px;top:468px">MetOxid</span>
<span class="t th" style="left:468px;width:72px;top:468px">NGlyc</span>
<span class="t th" style="left:540px;width:133px;top:468px">H1-CDR</span>
<span class="t th" style="left:673px;width:133px;top:468px">H2-CDR</span>
<span class="t th" style="left:806px;width:73px;top:468px">Length</span>
<span class="t th" style="left:52px;top:487px">ID</span>
<span class="t th" style="left:540px;width:133px;top:487px">Martin</span>
<span class="t th" style="left:673px;width:133px;top:487px">Martin</span>
<div style="left:30px;top:492px;width:13px;height:13px;background:#fff;border-radius:3px"></div>

<svg class="w" style="left:183px;top:491px;width:16px;height:13px"><use href="#eyes"/></svg><svg class="w" style="left:232.500px;top:488px;width:12px;height:17px"><use href="#sort"/></svg>
<svg class="w" style="left:255px;top:491px;width:16px;height:13px"><use href="#eyes"/></svg><svg class="w" style="left:305.500px;top:488px;width:12px;height:17px"><use href="#sort"/></svg>
<svg class="w" style="left:328px;top:491px;width:16px;height:13px"><use href="#eyes"/></svg><svg class="w" style="left:377.500px;top:488px;width:12px;height:17px"><use href="#sort"/></svg>
<svg class="w" style="left:400px;top:491px;width:16px;height:13px"><use href="#eyes"/></svg><svg class="w" style="left:450.500px;top:488px;width:12px;height:17px"><use href="#sort"/></svg>
<svg class="w" style="left:473px;top:491px;width:16px;height:13px"><use href="#eyes"/></svg><svg class="w" style="left:522.500px;top:488px;width:12px;height:17px"><use href="#sort"/></svg>
<svg class="w" style="left:545px;top:491px;width:16px;height:13px"><use href="#eyes"/></svg><svg class="w" style="left:655.500px;top:488px;width:12px;height:17px"><use href="#sort"/></svg>
<svg class="w" style="left:678px;top:491px;width:16px;height:13px"><use href="#eyes"/></svg><svg class="w" style="left:788.500px;top:488px;width:12px;height:17px"><use href="#sort"/></svg>
<svg class="w" style="left:811px;top:491px;width:16px;height:13px"><use href="#eyes"/></svg><svg class="w" style="left:860.500px;top:488px;width:12px;height:17px"><use href="#sort"/></svg>

<div class="cb" style="left:30px;top:532px"></div>
<div class="cb" style="left:30px;top:584px"></div>
<a class="t lk" style="left:52px;top:528px">clone_013_</a>
<a class="t lk" style="left:52px;top:579.500px">clone_015_</a>

<span class="t td" style="left:178px;width:72px;top:528px">1</span>
<span class="t td" style="left:250px;width:73px;top:528px">1</span>
<span class="t td" style="left:323px;width:72px;top:528px">0</span>
<span class="t td" style="left:395px;width:73px;top:528px">0</span>
<span class="t td" style="left:468px;width:72px;top:528px">0</span>
<span class="t td" style="left:540px;width:69px;top:528px">1/10A</span>
<span class="t td" style="left:609px;width:64px;top:506.700px">H2</span>
<span class="t td" style="left:609px;width:64px;top:521px">H4</span>
<span class="t td" style="left:609px;width:64px;top:535.700px">H35</span>
<span class="t td" style="left:609px;width:64px;top:550px">H102</span>
<span class="t td" style="left:673px;width:68px;top:528px">3/10B</span>
<span class="t td" style="left:741px;width:65px;top:520.700px">H58</span>
<span class="t td" style="left:741px;width:65px;top:534.700px">H78</span>
<span class="t td" style="left:806px;width:73px;top:528px">113</span>

<span class="t td" style="left:178px;width:72px;top:579.500px">2</span>
<span class="t td" style="left:250px;width:73px;top:579.500px">1</span>
<span class="t td" style="left:323px;width:72px;top:579.500px">0</span>
<span class="t td" style="left:395px;width:73px;top:579.500px">1</span>
<span class="t td" style="left:468px;width:72px;top:579.500px">0</span>
<span class="t td" style="left:540px;width:69px;top:579.500px">1/10A</span>
<span class="t td" style="left:609px;width:64px;top:564.300px">H2</span>
<span class="t td" style="left:609px;width:64px;top:579.500px">H4</span>
<span class="t td" style="left:609px;width:64px;top:593px">H32</span>
<span class="t td" style="left:673px;width:68px;top:579.500px">3/10B</span>
<span class="t td" style="left:741px;width:65px;top:579.500px">H78</span>
<span class="t td" style="left:806px;width:73px;top:579.500px">108</span>

<div class="sep" style="top:619px"></div>

<svg style="left:26px;top:641px;width:18px;height:18px;color:#000"><use href="#cc"/></svg>
<span class="t h" style="top:640px">Light chain alignment</span>
<div class="sep" style="top:679.500px"></div>
<svg style="left:26px;top:702px;width:18px;height:18px;color:#000"><use href="#cc"/></svg>
<span class="t h" style="top:700.500px">Light chain table</span>
<div class="sep" style="top:740px"></div>
<svg style="left:26px;top:762px;width:18px;height:18px;color:#000"><use href="#cc"/></svg>
<span class="t h" style="top:761px">Unnumbered Sequences</span>

<span class="t" style="left:26.500px;top:800.500px;font-size:16.6px;line-height:26px;height:26px;color:#495057">clone_010_</span>
<span class="t" style="left:26.500px;top:827px;font-size:16.6px;line-height:26px;height:26px;color:#495057">LYLQMNSLRAEDTAVYYCARDRAQLWFGSSAPGYWGPGTLVTVSSASTKGPSV</span>
<span class="t" style="left:26.500px;top:851px;font-size:16.6px;line-height:26px;height:26px;color:#495057">clone_012_</span>
</body></html>
